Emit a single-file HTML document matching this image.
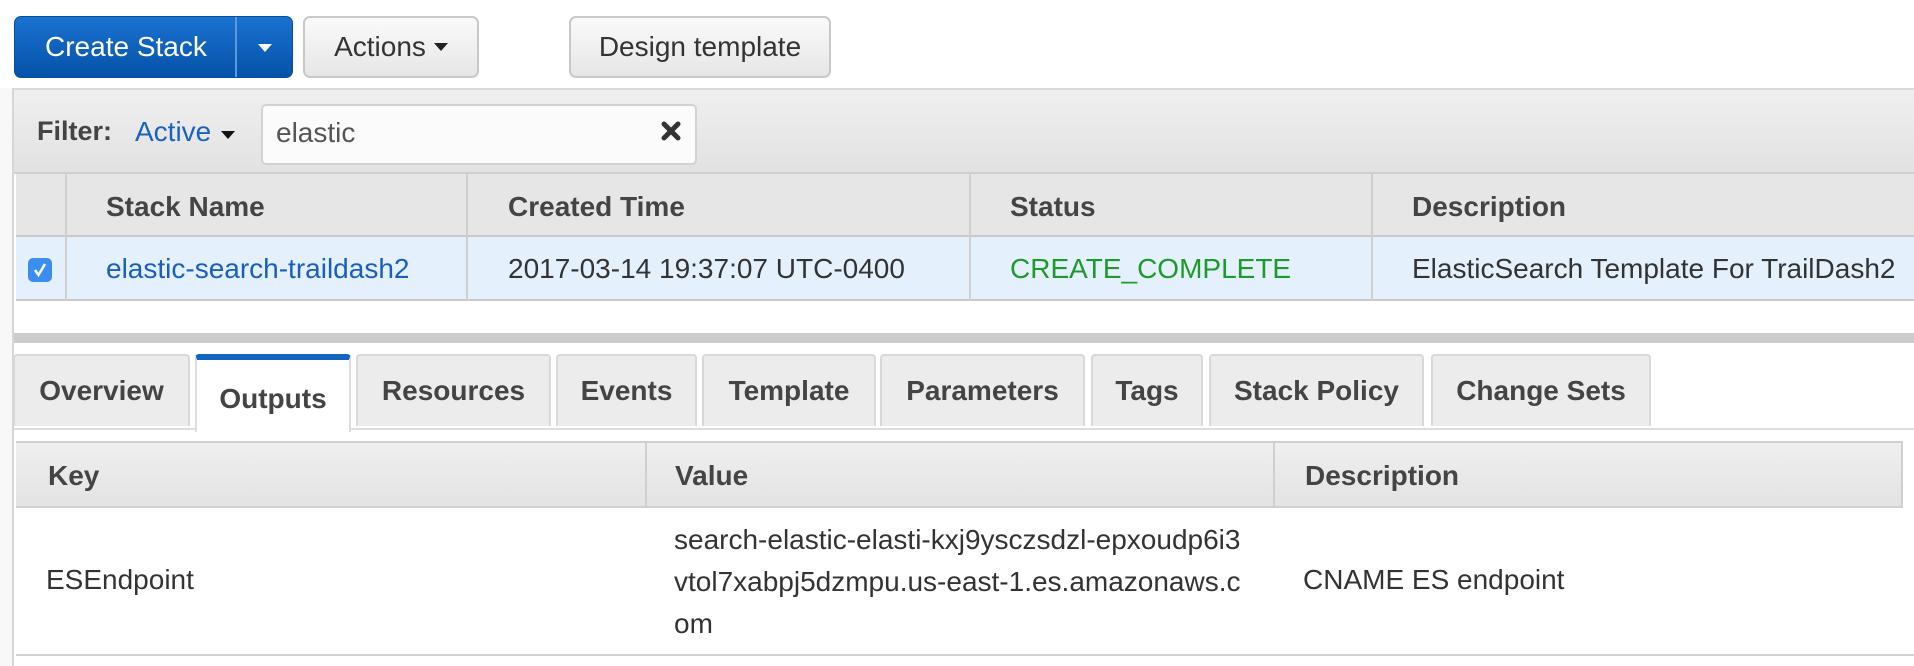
<!DOCTYPE html>
<html><head><style>
*{box-sizing:border-box;margin:0;padding:0}
body{width:1914px;height:666px;background:#fff;font-family:"Liberation Sans",Arial,sans-serif;position:relative;overflow:hidden;color:#444}
.a{position:absolute}
.leftbg{left:0;top:88px;width:14px;height:578px;background:#f8f8f8;border-right:2px solid #d6d6d6}
.btn{position:absolute;top:16px;height:62px;border:2px solid #c8c8c8;border-radius:7px;background:linear-gradient(#fafafa,#e6e6e6);font-size:28px;color:#333;display:flex;align-items:center;justify-content:center}
.caret{display:inline-block;width:0;height:0;border-left:7px solid transparent;border-right:7px solid transparent;border-top:8px solid #222;margin-left:8px;vertical-align:middle}
.cell{position:absolute;font-size:28px;display:flex;align-items:center}
.hd{font-weight:bold;color:#444}
.vl{position:absolute;width:2px;background:#cfcfcf}
.tab{position:absolute;top:354px;height:72px;border:2px solid #d8d8d8;border-bottom:none;border-radius:4px 4px 0 0;background:#ececec;font-weight:bold;font-size:28px;color:#444;display:flex;align-items:center;justify-content:center}
</style></head><body>
<div class="a leftbg"></div>

<div class="a" style="left:14px;top:16px;width:279px;height:62px;border-radius:7px;background:linear-gradient(#1a72d0,#0552a8);border:1px solid #0a4f9c"></div>
<div class="a" style="left:235px;top:17px;width:2px;height:60px;background:#5d98dc"></div>
<div class="a" style="left:45px;top:30px;color:#fff;font-size:28px;line-height:34px">Create Stack</div>
<div class="a" style="left:258px;top:44px;width:0;height:0;border-left:7px solid transparent;border-right:7px solid transparent;border-top:8px solid #fff"></div>

<div class="btn" style="left:303px;width:176px">Actions<span class="caret"></span></div>
<div class="btn" style="left:569px;width:262px">Design template</div>

<div class="a" style="left:14px;top:88px;width:1900px;height:86px;background:linear-gradient(#efefef,#e2e2e2);border-top:2px solid #dadada;border-bottom:2px solid #cfcfcf"></div>
<div class="a" style="left:37px;top:116px;font-size:27px;font-weight:bold;color:#444">Filter:</div>
<div class="a" style="left:135px;top:116px;font-size:28px;color:#1a62c0">Active</div>
<div class="a" style="left:221px;top:131px;width:0;height:0;border-left:7px solid transparent;border-right:7px solid transparent;border-top:8px solid #111"></div>
<div class="a" style="left:261px;top:104px;width:436px;height:61px;background:#fbfbfb;border:2px solid #d2d2d2;border-radius:5px"></div>
<div class="a" style="left:276px;top:117px;font-size:28px;color:#555">elastic</div>
<svg class="a" style="left:659px;top:120px" width="24" height="22" viewBox="0 0 24 22"><path d="M5 4 L19 18 M19 4 L5 18" stroke="#333" stroke-width="5" stroke-linecap="round"/></svg>

<div class="a" style="left:16px;top:174px;width:1898px;height:63px;background:#e6e6e6;border-bottom:2px solid #cacaca"></div>
<div class="a" style="left:16px;top:237px;width:1898px;height:64px;background:#e4f0fc;border-bottom:2px solid #cacaca"></div>
<div class="vl" style="left:65px;top:174px;height:127px"></div>
<div class="vl" style="left:466px;top:174px;height:127px"></div>
<div class="vl" style="left:969px;top:174px;height:127px"></div>
<div class="vl" style="left:1371px;top:174px;height:127px"></div>
<div class="cell hd" style="left:106px;top:175px;height:63px">Stack Name</div>
<div class="cell hd" style="left:508px;top:175px;height:63px">Created Time</div>
<div class="cell hd" style="left:1010px;top:175px;height:63px">Status</div>
<div class="cell hd" style="left:1412px;top:175px;height:63px">Description</div>
<div class="a" style="left:28px;top:258px;width:24px;height:24px;border-radius:5px;background:#3b8eef"></div>
<svg class="a" style="left:28px;top:258px" width="24" height="24"><path d="M7 12 L10.5 17 L17 6" stroke="#fff" stroke-width="2.5" fill="none"/></svg>
<div class="cell" style="left:106px;top:237px;height:64px;color:#1a5fbd">elastic-search-traildash2</div>
<div class="cell" style="left:508px;top:237px;height:64px;color:#333">2017-03-14 19:37:07 UTC-0400</div>
<div class="cell" style="left:1010px;top:237px;height:64px;color:#1e9a2c">CREATE_COMPLETE</div>
<div class="cell" style="left:1412px;top:237px;height:64px;color:#333">ElasticSearch Template For TrailDash2</div>

<div class="a" style="left:14px;top:333px;width:1900px;height:10px;background:#cbcbcb"></div>

<div class="a" style="left:14px;top:428px;width:1900px;height:2px;background:#ddd"></div>
<div class="tab" style="left:13px;width:177px">Overview</div>
<div class="a" style="left:195px;top:354px;width:156px;height:78px;background:#fff;border:2px solid #ddd;border-bottom:none;border-top:6px solid #1266c0;border-radius:4px 4px 0 0;font-weight:bold;font-size:28px;color:#444;display:flex;align-items:center;justify-content:center;padding-top:6px">Outputs</div>
<div class="tab" style="left:356px;width:195px">Resources</div>
<div class="tab" style="left:556px;width:141px">Events</div>
<div class="tab" style="left:702px;width:174px">Template</div>
<div class="tab" style="left:880px;width:205px">Parameters</div>
<div class="tab" style="left:1091px;width:112px">Tags</div>
<div class="tab" style="left:1209px;width:215px">Stack Policy</div>
<div class="tab" style="left:1431px;width:220px">Change Sets</div>

<div class="a" style="left:16px;top:441px;width:1887px;height:2px;background:#cfcfcf"></div>
<div class="a" style="left:16px;top:443px;width:1887px;height:65px;background:linear-gradient(#efefef,#e3e3e3);border-bottom:2px solid #cfcfcf;border-right:2px solid #cfcfcf"></div>
<div class="vl" style="left:645px;top:443px;height:64px"></div>
<div class="vl" style="left:1273px;top:443px;height:64px"></div>
<div class="cell hd" style="left:48px;top:444px;height:64px">Key</div>
<div class="cell hd" style="left:675px;top:444px;height:64px">Value</div>
<div class="cell hd" style="left:1305px;top:444px;height:64px">Description</div>
<div class="a" style="left:46px;top:564px;font-size:28px;color:#333">ESEndpoint</div>
<div class="a" style="left:674px;top:519px;font-size:28px;color:#333;line-height:42px">search-elastic-elasti-kxj9ysczsdzl-epxoudp6i3<br>vtol7xabpj5dzmpu.us-east-1.es.amazonaws.c<br>om</div>
<div class="a" style="left:1303px;top:564px;font-size:28px;color:#333">CNAME ES endpoint</div>
<div class="a" style="left:16px;top:654px;width:1898px;height:2px;background:#d0d0d0"></div>
</body></html>
